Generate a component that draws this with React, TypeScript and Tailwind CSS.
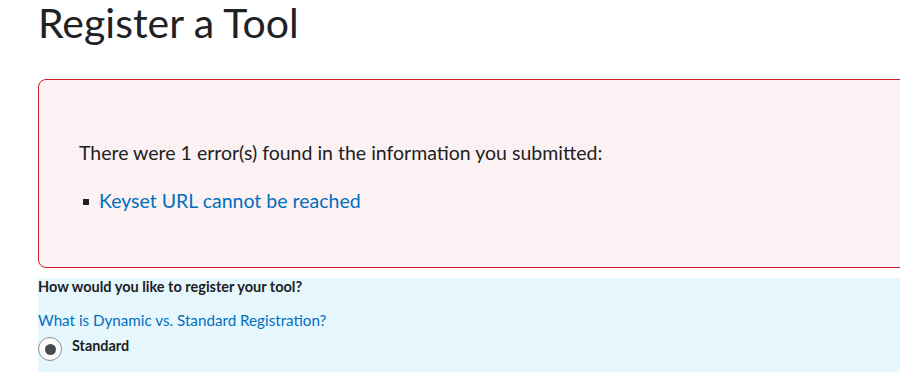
import React from 'react';

const App: React.FC = () => {
  return (
    <div className="w-[900px] h-[372px] overflow-hidden bg-white font-['Lato','Liberation_Sans',sans-serif] text-[#202122]">
      <div className="pl-[38px]">
        <h1 className="text-[41px] leading-[46px] font-normal text-[#202122]">Register a Tool</h1>

        <div className="mt-[33px] h-[189px] w-[900px] rounded-tl-[8px] rounded-bl-[8px] border border-[#cd2026] bg-[#fcf2f3] pl-[40px] pt-[61px]">
          <p className="text-[19.5px] leading-[24px] text-[#202122]">There were 1 error(s) found in the information you submitted:</p>
          <ul className="mt-[24px] pl-[4px]">
            <li className="flex items-center gap-[10px]">
              <span className="block w-[6px] h-[6px] bg-[#202122] mt-[2px]" />
              <a href="#" className="text-[19.5px] leading-[24px] text-[#006fbf]">Keyset URL cannot be reached</a>
            </li>
          </ul>
        </div>

        <div className="mt-[10px] h-[100px] bg-[#e6f7fe] pt-[1px]">
          <p className="text-[14.5px] leading-[16px] font-bold text-[#202122]">How would you like to register your tool?</p>
          <a href="#" className="block mt-[16px] text-[15.2px] leading-[18px] text-[#006fbf]">What is Dynamic vs. Standard Registration?</a>
          <label className="flex items-start gap-[10px] mt-[8px]">
            <span className="flex items-center justify-center w-[24px] h-[24px] rounded-full border border-[#868c8f] bg-white">
              <span className="block w-[11px] h-[11px] rounded-full bg-[#494c4e]" />
            </span>
            <span className="text-[14.4px] leading-[18px] font-bold text-[#202122]">Standard</span>
          </label>
        </div>
      </div>
    </div>
  );
};

export default App;
